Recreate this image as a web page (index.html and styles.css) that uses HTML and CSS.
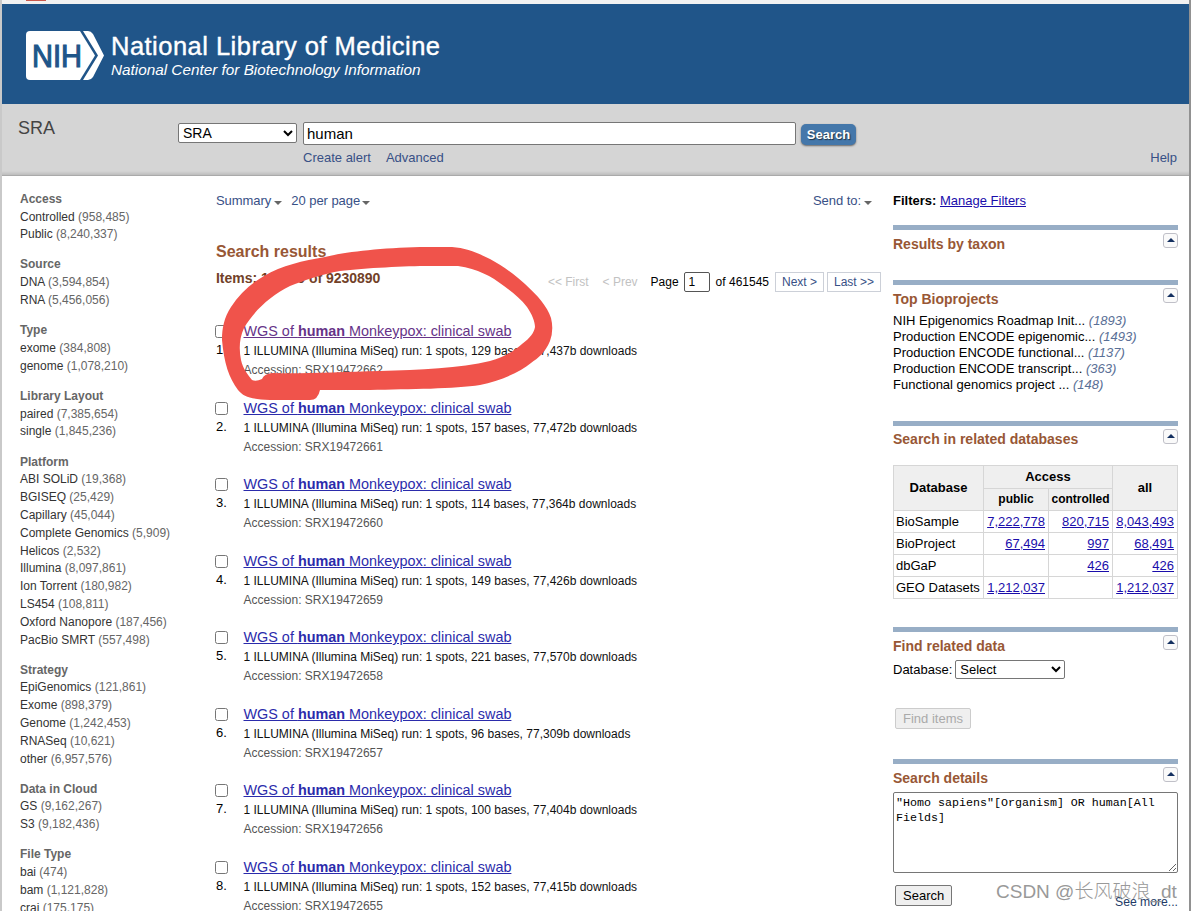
FILE: index.html
```html
<!DOCTYPE html>
<html lang="en">
<head>
<meta charset="utf-8">
<title>human - SRA - NCBI</title>
<link rel="stylesheet" href="styles.css">
</head>
<body>
<div class="page">
  <div class="tabstrip"><span class="tab-mark"></span></div>
  <header class="banner">
    <svg class="logo" width="79" height="50" viewBox="0 0 79 50">
      <path d="M4 0H54L69 24.500L54 49H4Q0 49 0 45V4Q0 0 4 0Z" fill="#fff"/>
      <path d="M58 0H62Q65 0 67 3L78 24.500L67 46Q65 49 62 49H57L72 24.500L57 0Z" fill="#fff"/>
      <text class="nih" x="6" y="35.500" textLength="50" lengthAdjust="spacingAndGlyphs">NIH</text>
    </svg>
    <div class="brand">
      <div class="brand-main">National Library of Medicine</div>
      <div class="brand-sub">National Center for Biotechnology Information</div>
    </div>
  </header>
  <section class="searchbar">
    <div class="db-name">SRA</div>
    <select class="db-select"><option>SRA</option></select>
    <div class="query">
      <div class="query-row"><input class="query-input" value="human"><button class="go">Search</button></div>
      <div class="query-links"><a>Create alert</a><a>Advanced</a></div>
    </div>
    <a class="help">Help</a>
  </section>
  <main class="content">
    <aside class="facets" id="facets"></aside>
    <section class="results">
      <div class="display-bar"><a>Summary</a><i class="caret"></i><a class="per-page">20 per page</a><i class="caret"></i><a class="send">Send to:</a><i class="caret"></i></div>
      <h2>Search results</h2>
      <div class="count-row">
        <h3>Items: 1 to 20 of 9230890</h3>
        <div class="pager">
          <span class="off first">&lt;&lt; First</span><span class="off prev">&lt; Prev</span><span>Page</span><input value="1"><span class="of">of 461545</span><a class="next">Next &gt;</a><a class="last">Last &gt;&gt;</a>
        </div>
      </div>
      <div id="list"></div>
    </section>
    <aside class="right">
      <div class="filters"><b>Filters:</b> <a>Manage Filters</a></div>
      <section class="portlet taxon"><div class="head"><h4>Results by taxon</h4><i class="toggle"></i></div></section>
      <section class="portlet projects"><div class="head"><h4>Top Bioprojects</h4><i class="toggle"></i></div>
        <ul>
          <li>NIH Epigenomics Roadmap Init... <em>(1893)</em></li>
          <li>Production ENCODE epigenomic... <em>(1493)</em></li>
          <li>Production ENCODE functional... <em>(1137)</em></li>
          <li>Production ENCODE transcript... <em>(363)</em></li>
          <li>Functional genomics project ... <em>(148)</em></li>
        </ul>
      </section>
      <section class="portlet related"><div class="head"><h4>Search in related databases</h4><i class="toggle"></i></div>
        <table>
          <colgroup><col class="c1"><col class="c2"><col class="c3"><col class="c4"></colgroup>
          <tr class="h1"><th rowspan="2">Database</th><th colspan="2">Access</th><th rowspan="2">all</th></tr>
          <tr class="h2"><th>public</th><th>controlled</th></tr>
          <tr><td>BioSample</td><td><a>7,222,778</a></td><td><a>820,715</a></td><td><a>8,043,493</a></td></tr>
          <tr><td>BioProject</td><td><a>67,494</a></td><td><a>997</a></td><td><a>68,491</a></td></tr>
          <tr><td>dbGaP</td><td></td><td><a>426</a></td><td><a>426</a></td></tr>
          <tr><td>GEO Datasets</td><td><a>1,212,037</a></td><td></td><td><a>1,212,037</a></td></tr>
        </table>
      </section>
      <section class="portlet find"><div class="head"><h4>Find related data</h4><i class="toggle"></i></div>
        <div class="find-row"><label>Database:</label><select><option>Select</option></select></div>
        <button class="btn" disabled>Find items</button>
      </section>
      <section class="portlet details"><div class="head"><h4>Search details</h4><i class="toggle"></i></div>
        <textarea>"Homo sapiens"[Organism] OR human[All Fields]</textarea>
        <div class="details-foot"><button class="btn">Search</button><a>See more...</a></div>
      </section>
    </aside>
  </main>
  <svg class="marker" width="340" height="160" viewBox="216 243 340 160">
    <path fill="#f0534b" fill-rule="evenodd" d="M325 257C345 252 380 248 420 247H452C466 248 478 253 490 259C503 266 515 275 525 284C538 296 547 306 551 318Q554 330 550 341C545 353 538 358 531 363C520 372 500 381 480 385C455 389 410 389 370 390H320Q318 400 310 400H270C250 399 244 397 238 390C229 378 224 363 222 340C222 328 224 318 231 307C239 295 250 284 264 276C282 265 303 261 325 257ZM430 266C405 266 366 268 340 271C322 274 303 281 290 286C270 296 254 311 244 328C239 339 239 350 241 360C243 369 248 375 252 380Q256 382 262 379Q264 374 272 373C300 374 340 372 380 371C420 370 460 368 490 361C505 357 515 350 522 344C530 338 534 333 535 327C535 322 532 314 527 307C521 299 512 292 504 286C491 276 478 269 458 266Z"/>
  </svg>
  <div class="watermark">CSDN @长风破浪_dt</div>
</div>
<script src="app.js"></script>
</body>
</html>
```
FILE: styles.css
```css
* { box-sizing: border-box; }
body { margin: 0; font-family: "Liberation Sans", Arial, sans-serif; font-size: 13px; color: #000; overflow: hidden; }
.page { position: relative; width: 1191px; height: 911px; overflow: hidden; border-left: 2px solid #c9c9c9; border-right: 2px solid #919191; background: #fff; }
h2, h3, h4, ul { margin: 0; padding: 0; }
a { color: #385086; }
input, button, select, textarea { font-family: inherit; margin: 0; }
.tabstrip { height: 4px; background: #f1f1f1; display: flex; }
.tab-mark { width: 20px; height: 1px; margin-left: 24px; background: #c9584c; }
.banner { height: 100px; background: #205589; color: #fff; display: flex; padding: 27px 0 0 24px; }
.nih { font-size: 31px; font-weight: 400; fill: #205589; stroke: #205589; stroke-width: 1.1px; }
.brand { margin-left: 6px; white-space: nowrap; }
.brand-main { font-size: 25.5px; line-height: 29px; height: 30px; padding-top: 1px; letter-spacing: .48px; -webkit-text-stroke: .4px #fff; }
.brand-sub { font-size: 15.3px; line-height: 17px; font-style: italic; }
.searchbar { height: 72px; background: linear-gradient(#d5d5d5 67px, #bdbdbd); border-bottom: 1px solid #aaa; display: flex; }
.db-name { width: 176px; padding: 14px 0 0 16px; font-size: 18px; line-height: 21px; color: #444; }
.db-select { width: 119px; height: 20px; margin-top: 19px; font-size: 14px; padding: 0; border: 1px solid #767676; border-radius: 2px; background-color: #fff; }
.query { margin: 18px 0 0 6px; }
.query-row { display: flex; }
.query-input { width: 493px; height: 23px; font-size: 15px; padding: 1px 3px; border: 1px solid #767676; border-radius: 2px; }
.go { width: 55px; height: 21px; margin: 2px 0 0 5px; padding: 0; border: 0; border-radius: 5px; background: #4477aa; color: #fff; font-size: 13px; font-weight: 700; text-shadow: 1px 1px 1px #234; box-shadow: 0 1px 2px #666; }
.query-links { display: flex; gap: 15px; margin-top: 5px; line-height: 15px; }
.help { margin: 46px 0 0 auto; padding-right: 12px; line-height: 15px; }
.content { display: flex; height: 735px; padding-left: 18px; }
.facets { width: 196px; padding-top: 14.8px; font-size: 12px; line-height: 17.8px; color: #666; white-space: nowrap; }
.facets section { margin-bottom: 12.3px; }
.facets b { display: block; color: #666; }
.facets a { color: #333; }
.results { width: 665px; }
.display-bar { display: flex; align-items: center; height: 16px; margin-top: 17px; line-height: 16px; letter-spacing: -.05px; }
.caret { margin: 3px 0 0 3px; border: 4px solid transparent; border-top-color: #666; border-bottom: 0; }
.per-page { margin-left: 9px; }
.per-page + .caret { margin-left: 2px; }
.send { margin-left: auto; }
.send + .caret { margin-right: 9px; }
.results h2 { margin-top: 33px; font-size: 16px; line-height: 20px; color: #985735; }
.count-row { display: flex; justify-content: space-between; height: 60px; padding-top: 10px; }
.results h3 { font-size: 14px; line-height: 16px; margin-top: -2px; color: #724128; white-space: nowrap; letter-spacing: -.03px; }
.pager { display: flex; align-items: center; height: 20px; font-size: 12px; white-space: nowrap; }
.off { color: #c2c2c2; }
.first { margin-right: 14px; }
.prev { margin-right: 13px; }
.pager input { width: 26px; height: 20px; margin: 0 6px 0 5px; padding: 1px 4px; font-size: 12px; border: 1px solid #555; border-radius: 2px; }
.pager a { height: 20px; line-height: 18px; border: 1px solid #ccd0d8; text-align: center; }
.next { width: 49px; margin: 0 3px 0 6px; }
.last { width: 54px; }
.item { display: flex; height: 76.5px; }
.pick { width: 27.5px; }
.pick input { display: block; width: 13px; height: 13px; margin: 3px 0 4px -1px; }
.pick span { display: block; font-size: 13px; line-height: 16px; }
.item .title { display: block; font-size: 14.4px; line-height: 18px; color: #2b2bab; text-decoration: underline; white-space: nowrap; }
.item .title.seen { color: #663388; }
.desc { font-size: 12px; line-height: 16px; margin-top: 3px; color: #111; white-space: nowrap; }
.acc { font-size: 12px; line-height: 16px; margin-top: 3px; color: #555; }
.right { width: 285px; margin-left: 12px; }
.filters { height: 49px; padding-top: 17px; line-height: 15px; }
.filters a, table a { color: #1a0dab; text-decoration: underline; }
.portlet { border-top: 5px solid #98aec6; }
.head { display: flex; justify-content: space-between; height: 30px; padding-top: 3px; }
h4 { font-size: 14px; line-height: 16px; padding-top: 3px; color: #985735; white-space: nowrap; }
.toggle { width: 15px; height: 15px; border: 1px solid #c0c0c8; border-radius: 3px; padding: 4px 2.5px; background: #fafafa; }
.toggle::before { content: ""; display: block; width: 0; border: 4px solid transparent; border-bottom-color: #143060; border-top: 0; }
.taxon { height: 55px; }
.projects { height: 141px; }
.projects ul { list-style: none; margin-top: -2px; line-height: 16px; white-space: nowrap; }
.projects em { color: #5a6f96; }
.related { height: 206px; }
.related h4 { padding-top: 2px; }
table { table-layout: fixed; width: 285px; border-collapse: collapse; margin-top: 9px; font-size: 13px; }
.c1 { width: 90px; } .c2 { width: 65px; } .c3 { width: 64px; } .c4 { width: 65px; }
tr { height: 22px; }
.h1 { height: 23px; }
.h2 th { font-size: 12px; }
th, td { border: 1px solid #d6d6d6; padding: 0 2px 1px; white-space: nowrap; line-height: 15px; }
th { background: #efefef; }
td { text-align: right; padding-right: 3px; }
td:first-child { text-align: left; }
.find { height: 132px; }
.find-row { display: flex; align-items: center; gap: 3px; height: 20px; margin-top: -3px; }
.find-row select { width: 110px; height: 19px; font-size: 13px; padding: 0; border: 1px solid #767676; border-radius: 2px; background: #fff; }
.btn { height: 21px; padding: 0 7px; font-size: 13px; border: 1px solid #767676; border-radius: 2px; background: #efefef; color: #000; white-space: nowrap; }
.btn:disabled { color: #aaa; border-color: #ccc; }
.find .btn { margin: 29px 0 0 2px; }
.details .head { height: 28px; }
textarea { display: block; width: 285px; height: 81px; padding: 3px 2px 2px; border: 1px solid #767676; border-radius: 2px; font-family: "Liberation Mono", monospace; font-size: 11.67px; line-height: 15px; resize: both; }
.details-foot { display: flex; justify-content: space-between; padding: 12px 0 0 2px; }
.details-foot a { padding-top: 9px; font-size: 12.2px; line-height: 16px; color: #223a66; }
.marker { position: absolute; left: 214px; top: 243px; }
.watermark { position: absolute; left: 994px; top: 880px; font-family: "Liberation Sans", "Noto Sans CJK SC", sans-serif; font-weight: 300; font-size: 19px; line-height: 24px; color: #999; white-space: nowrap; }
```
FILE: app.js
```js
const facets = [
  ["Access", ["Controlled", "958,485"], ["Public", "8,240,337"]],
  ["Source", ["DNA", "3,594,854"], ["RNA", "5,456,056"]],
  ["Type", ["exome", "384,808"], ["genome", "1,078,210"]],
  ["Library Layout", ["paired", "7,385,654"], ["single", "1,845,236"]],
  ["Platform", ["ABI SOLiD", "19,368"], ["BGISEQ", "25,429"], ["Capillary", "45,044"], ["Complete Genomics", "5,909"], ["Helicos", "2,532"], ["Illumina", "8,097,861"], ["Ion Torrent", "180,982"], ["LS454", "108,811"], ["Oxford Nanopore", "187,456"], ["PacBio SMRT", "557,498"]],
  ["Strategy", ["EpiGenomics", "121,861"], ["Exome", "898,379"], ["Genome", "1,242,453"], ["RNASeq", "10,621"], ["other", "6,957,576"]],
  ["Data in Cloud", ["GS", "9,162,267"], ["S3", "9,182,436"]],
  ["File Type", ["bai", "474"], ["bam", "1,121,828"], ["crai", "175,175"]]
];
document.getElementById("facets").innerHTML = facets.map(([name, ...rows]) =>
  `<section><b>${name}</b>${rows.map(([k, n]) => `<div><a>${k}</a> (${n})</div>`).join("")}</section>`).join("");

const runs = [["129", "77,437"], ["157", "77,472"], ["114", "77,364"], ["149", "77,426"], ["221", "77,570"], ["96", "77,309"], ["100", "77,404"], ["152", "77,415"]];
document.getElementById("list").innerHTML = runs.map(([bases, size], i) =>
  `<div class="item"><div class="pick"><input type="checkbox"><span>${i + 1}.</span></div><div>
  <a class="title${i ? "" : " seen"}">WGS of <b>human</b> Monkeypox: clinical swab</a>
  <div class="desc">1 ILLUMINA (Illumina MiSeq) run: 1 spots, ${bases} bases, ${size}b downloads</div>
  <div class="acc">Accession: SRX${19472662 - i}</div></div></div>`).join("");
```
